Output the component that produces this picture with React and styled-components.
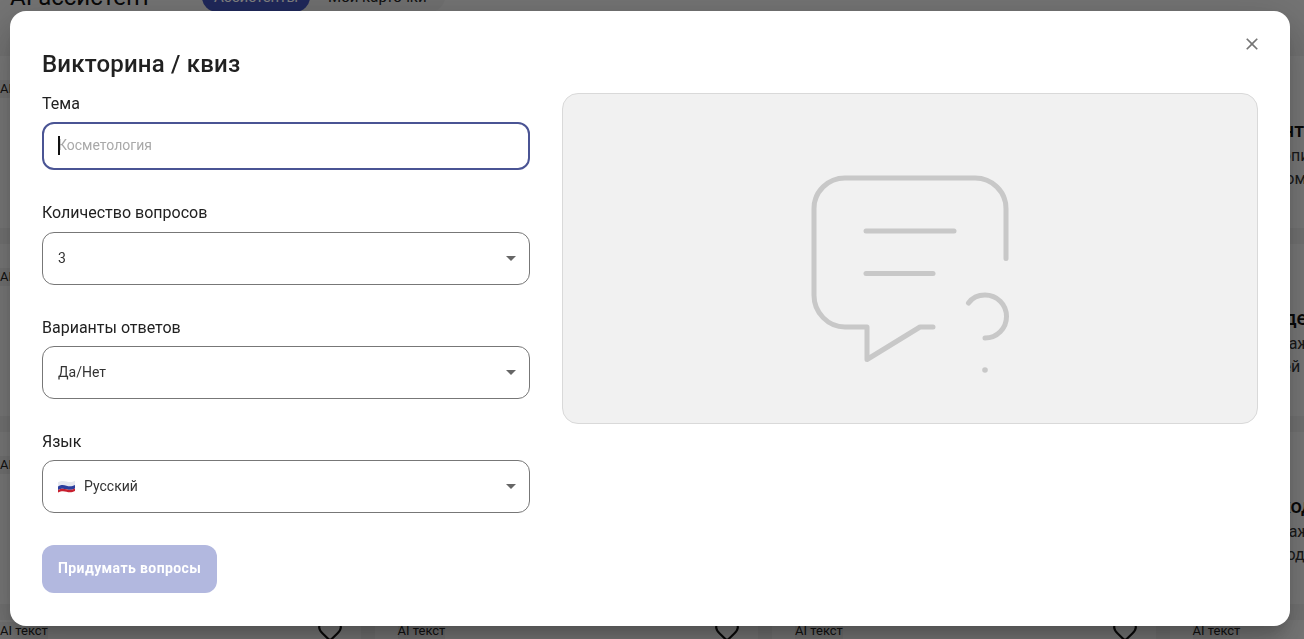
import React from 'react';
import styled, { createGlobalStyle } from 'styled-components';
import { Heart } from 'lucide-react';

const GlobalStyle = createGlobalStyle`
  html, body { margin: 0; padding: 0; height: 100%; overflow: hidden; }
  body { font-family: Roboto, "Noto Sans", sans-serif; background: #e8e8e8; }
  * { box-sizing: border-box; }
`;

const cards = [
  { title: 'Контент', lines: ['Текст копирайтинга', 'В удобном виде'] },
  { title: 'Мои идеи', lines: ['Много важных постов', 'Из статей'] },
  { title: 'Свой код', lines: ['Много важных задач', 'Это метод'] },
];

const Page = styled.div`
  height: 639px;
  overflow: hidden;
  background: #e8e8e8;
`;

const TopBar = styled.header`
  display: flex;
  align-items: center;
  gap: 52px;
  height: 30px;
  margin-top: -18px;
  padding-left: 10px;
`;

const PageTitle = styled.h1`
  margin: 0;
  width: 140px;
  font-size: 24px;
  font-weight: 400;
  color: #111;
  white-space: nowrap;
`;

const Tabs = styled.div`
  display: flex;
  width: 243px;
  height: 30px;
  border-radius: 15px;
  background: #e0e0e0;
`;

const Tab = styled.div`
  display: flex;
  align-items: center;
  height: 30px;
  padding: 0 ${(p) => (p.$active ? '12px' : '18px')};
  border-radius: 15px;
  font-size: 15px;
  white-space: nowrap;
  color: ${(p) => (p.$active ? '#fff' : '#222')};
  background: ${(p) => (p.$active ? '#3f51b5' : 'transparent')};
`;

const CardGrid = styled.div`
  display: grid;
  grid-template-columns: repeat(4, 383.5px);
  grid-template-rows: repeat(3, 172px) 60px;
  column-gap: 14px;
  row-gap: 16px;
  width: 1600px;
  margin: 44px 0 0 -23px;
`;

const Card = styled.article`
  padding: ${(p) => (p.$compact ? '0' : '21px')} 18px 0 23px;
  background: #f3f3f3;
`;

const CardHead = styled.div`
  display: flex;
  align-items: center;
  justify-content: space-between;
  height: ${(p) => (p.$compact ? '22px' : '24px')};
`;

const Tag = styled.span`
  font-size: 13px;
  line-height: 18px;
  color: #222;
  background: #e6e6e6;
`;

const HeartIcon = styled(Heart)`
  margin-top: -3px;
  color: #111;
`;

const CardBody = styled.div`
  margin: 15px 0 0 35px;
  white-space: nowrap;
`;

const CardTitle = styled.div`
  font-size: 20px;
  line-height: 28px;
  font-weight: 500;
  color: #111;
`;

const CardLine = styled.div`
  font-size: 16px;
  line-height: 23px;
  color: #333;
`;

const Backdrop = styled.div`
  position: fixed;
  inset: 0;
  padding: 11px 14px 13px 10px;
  background: rgba(0, 0, 0, 0.5);
`;

const Modal = styled.section`
  position: relative;
  height: 615px;
  padding: 37px 32px 33px;
  border-radius: 16px;
  background: #fff;
  box-shadow: 0 11px 15px -7px rgba(0, 0, 0, 0.2), 0 24px 38px 3px rgba(0, 0, 0, 0.14), 0 9px 46px 8px rgba(0, 0, 0, 0.12);
`;

const CloseButton = styled.button`
  position: absolute;
  top: 23px;
  right: 28px;
  display: flex;
  width: 20px;
  height: 20px;
  padding: 0;
  border: none;
  background: none;
  color: #757575;
`;

const ModalTitle = styled.h2`
  margin: 0 0 13px;
  font-size: 24px;
  line-height: 32px;
  font-weight: 500;
  letter-spacing: 0.2px;
  color: #212121;
`;

const Columns = styled.div`
  display: grid;
  grid-template-columns: 488px 696px;
  column-gap: 32px;
  align-items: start;
`;

const Form = styled.form`
  display: flex;
  flex-direction: column;
  align-items: flex-start;
  gap: 32px;
`;

const Field = styled.label`
  display: flex;
  flex-direction: column;
  gap: ${(p) => p.$gap || 7}px;
  width: 100%;
`;

const Label = styled.span`
  font-size: 16px;
  line-height: 22px;
  color: #212121;
`;

const InputWrap = styled.div`
  position: relative;
`;

const Input = styled.input`
  display: block;
  width: 100%;
  height: 48px;
  padding: 0 14px 2px;
  border: 2px solid #4a5494;
  border-radius: 12px;
  outline: none;
  font-family: inherit;
  font-size: 14px;
  color: #212121;
  caret-color: transparent;
  &::placeholder { color: #a9a9a9; opacity: 1; }
`;

const Caret = styled.span`
  position: absolute;
  top: 14px;
  left: 16px;
  width: 2px;
  height: 19px;
  background: #111;
`;

const Select = styled.div`
  display: flex;
  align-items: center;
  gap: 9px;
  height: 53px;
  padding: 0 13px 0 15px;
  border: 1px solid #777;
  border-radius: 12px;
  font-size: 14px;
  color: #333;
`;

const SelectValue = styled.span`
  flex: 1;
  padding-bottom: 2px;
`;

const Arrow = styled.span`
  width: 0;
  height: 0;
  border-left: 5.5px solid transparent;
  border-right: 5.5px solid transparent;
  border-top: 5.5px solid #666;
`;

const SubmitButton = styled.button`
  height: 48px;
  padding: 0 16px 2px;
  border: none;
  border-radius: 12px;
  background: #b2b8df;
  font-family: inherit;
  font-size: 14px;
  font-weight: 700;
  letter-spacing: 0.4px;
  color: #fff;
`;

const Preview = styled.div`
  display: flex;
  align-items: center;
  justify-content: center;
  height: 331px;
  border: 1px solid #d9d9d9;
  border-radius: 16px;
  background: #f1f1f1;
`;

const FlagRu = () => (
  <svg width="17" height="13" viewBox="0 0 17 13">
    <path d="M0 2.2C3 .6 6 .8 8.500 1.500S14 2.600 17 .800V5C14 6.600 11 6.400 8.500 5.700S3 4.600 0 6.400z" fill="#e6e8ef" />
    <path d="M0 6.400C3 4.600 6 5 8.500 5.700S14 6.600 17 5V8.600C14 10.200 11 10 8.500 9.300S3 8.200 0 10z" fill="#2b3f9e" />
    <path d="M0 10C3 8.200 6 8.600 8.500 9.300S14 10.200 17 8.600V11C14 12.600 11 12.400 8.500 11.700S3 10.800 0 12.500z" fill="#c8202f" />
  </svg>
);

const QuizIcon = () => (
  <svg width="240" height="240" viewBox="790 138.500 240 240" fill="none" stroke="#c8c8c8" strokeWidth="5" strokeLinecap="round" strokeLinejoin="round">
    <path d="M1006 258V208C1006 191 992 177.500 975 177.500H845C828 177.500 814 191 814 208V295C814 312 828 326.500 845 326.500H867V359L920 326.500H933" />
    <path d="M866 230.500H954" />
    <path d="M866 273H933" />
    <path d="M968.500 302.500C972 297.500 978 294.500 985 294.500C997 294.500 1006.500 304 1006.500 316C1006.500 328 997 337.500 985 337.500" />
    <circle cx="985" cy="369.500" r="2.800" fill="#c8c8c8" stroke="none" />
  </svg>
);

const App = () => {
  return (
    <>
      <GlobalStyle />
      <Page>
        <TopBar>
          <PageTitle>AI ассистент</PageTitle>
          <Tabs>
            <Tab $active>Ассистенты</Tab>
            <Tab>Мои карточки</Tab>
          </Tabs>
        </TopBar>
        <CardGrid>
          {cards.map((card, row) =>
            [0, 1, 2, 3].map((col) => (
              <Card key={`${row}-${col}`}>
                <CardHead>
                  <Tag>AI текст</Tag>
                </CardHead>
                <CardBody>
                  <CardTitle>{card.title}</CardTitle>
                  {card.lines.map((line) => (
                    <CardLine key={line}>{line}</CardLine>
                  ))}
                </CardBody>
              </Card>
            ))
          )}
          {[0, 1, 2, 3].map((col) => (
            <Card key={col} $compact>
              <CardHead $compact>
                <Tag>AI текст</Tag>
                <HeartIcon size={26} strokeWidth={2} />
              </CardHead>
            </Card>
          ))}
        </CardGrid>
      </Page>

      <Backdrop>
        <Modal>
          <CloseButton aria-label="Закрыть">
            <svg width="20" height="20" viewBox="0 0 24 24" fill="currentColor">
              <path d="M19 6.410 17.590 5 12 10.590 6.410 5 5 6.410 10.590 12 5 17.590 6.410 19 12 13.410 17.590 19 19 17.590 13.410 12z" />
            </svg>
          </CloseButton>
          <ModalTitle>Викторина / квиз</ModalTitle>
          <Columns>
            <Form>
              <Field>
                <Label>Тема</Label>
                <InputWrap>
                  <Input placeholder="Косметология" />
                  <Caret />
                </InputWrap>
              </Field>
              <Field $gap={8}>
                <Label>Количество вопросов</Label>
                <Select>
                  <SelectValue>3</SelectValue>
                  <Arrow />
                </Select>
              </Field>
              <Field>
                <Label>Варианты ответов</Label>
                <Select>
                  <SelectValue>Да/Нет</SelectValue>
                  <Arrow />
                </Select>
              </Field>
              <Field>
                <Label>Язык</Label>
                <Select>
                  <FlagRu />
                  <SelectValue>Русский</SelectValue>
                  <Arrow />
                </Select>
              </Field>
              <SubmitButton type="button">Придумать вопросы</SubmitButton>
            </Form>
            <Preview>
              <QuizIcon />
            </Preview>
          </Columns>
        </Modal>
      </Backdrop>
    </>
  );
};

export default App;
